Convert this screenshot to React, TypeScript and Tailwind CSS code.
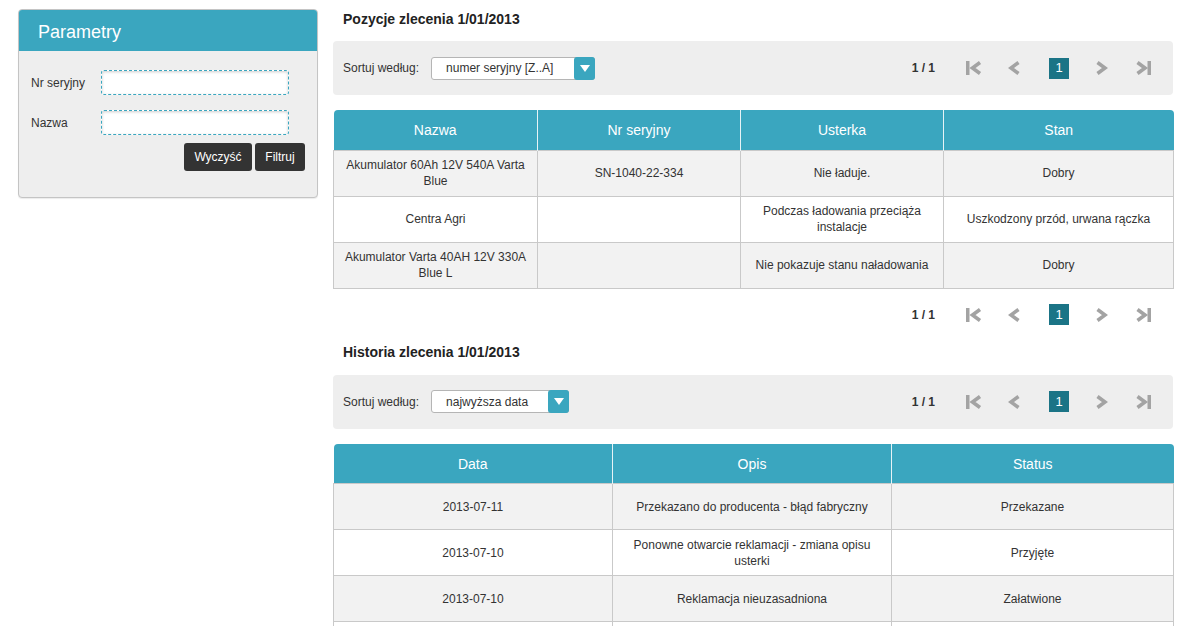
import React from "react"

const font = { fontFamily: '"Liberation Sans", Arial, sans-serif' }

type Col = { label: string; w: string }

function FirstIcon() {
  return (
    <svg width="16" height="14" viewBox="0 0 16 14">
      <rect x="0" y="0" width="3.5" height="14" fill="#a3a3a3" />
      <path d="M14 1.5 L6.5 7 L14 12.5" fill="none" stroke="#a3a3a3" strokeWidth="3.6" strokeLinejoin="miter" />
    </svg>
  )
}

function PrevIcon() {
  return (
    <svg width="12" height="14" viewBox="0 0 12 14">
      <path d="M10.5 1.5 L3 7 L10.5 12.5" fill="none" stroke="#a3a3a3" strokeWidth="3.6" />
    </svg>
  )
}

function NextIcon() {
  return (
    <svg width="12" height="14" viewBox="0 0 12 14">
      <path d="M1.5 1.5 L9 7 L1.5 12.5" fill="none" stroke="#a3a3a3" strokeWidth="3.6" />
    </svg>
  )
}

function LastIcon() {
  return (
    <svg width="15" height="14" viewBox="0 0 15 14">
      <path d="M1.5 1.5 L9 7 L1.5 12.5" fill="none" stroke="#a3a3a3" strokeWidth="3.6" />
      <rect x="11.5" y="0" width="3.5" height="14" fill="#a3a3a3" />
    </svg>
  )
}

function Pager() {
  return (
    <div className="flex items-center">
      <span className="text-[12px] font-bold text-[#333]">1 / 1</span>
      <span className="ml-[31px] flex"><FirstIcon /></span>
      <span className="ml-[26px] flex"><PrevIcon /></span>
      <span className="ml-[29px] flex h-[21px] w-[20px] items-center justify-center bg-[#1b7486] text-[13px] text-white">1</span>
      <span className="ml-[27px] flex"><NextIcon /></span>
      <span className="ml-[28px] flex"><LastIcon /></span>
    </div>
  )
}

function SortBar({ value, selectW }: { value: string; selectW: string }) {
  return (
    <div className="flex h-[54px] items-center justify-between rounded-[4px] bg-[#eeeeee] pl-[10px] pr-[22px]">
      <div className="flex items-center">
        <span className="text-[12px] text-[#333]">Sortuj według:</span>
        <div className={`ml-[12px] flex h-[23px] items-center justify-between rounded-[3px] border border-[#b5b5b5] bg-white pl-[14px] ${selectW}`}>
          <span className="text-[12px] text-[#333]">{value}</span>
          <span className="-mr-px flex h-[23px] w-[21px] items-center justify-center rounded-[3px] bg-[#3aa6bf]">
            <svg width="10" height="7" viewBox="0 0 10 7">
              <path d="M0 0 L10 0 L5 7 Z" fill="#fff" />
            </svg>
          </span>
        </div>
      </div>
      <Pager />
    </div>
  )
}

function DataTable({ cols, rows }: { cols: Col[]; rows: string[][] }) {
  return (
    <table className="w-full table-fixed border-collapse text-center">
      <thead>
        <tr className="h-[40px] bg-[#3aa6bf] text-[14px] text-white">
          {cols.map((c, i) => (
            <th
              key={c.label}
              className={`${c.w} pt-[2px] font-normal ${i === 0 ? "rounded-tl-[4px]" : "border-l border-[#e6f3f6]"} ${i === cols.length - 1 ? "rounded-tr-[4px]" : ""}`}
            >
              {c.label}
            </th>
          ))}
        </tr>
      </thead>
      <tbody>
        {rows.map((r, ri) => (
          <tr key={ri} className={`h-[46px] text-[12px] text-[#333] ${ri % 2 === 0 ? "bg-[#f2f2f2]" : "bg-white"}`}>
            {r.map((cell, ci) => (
              <td key={ci} className="border border-[#c9c9c9] px-[8px] leading-[16px]">
                {cell}
              </td>
            ))}
          </tr>
        ))}
      </tbody>
    </table>
  )
}

export default function App() {
  return (
    <div className="flex min-h-[626px] bg-white pt-[9px] pl-[18px]" style={font}>
      {/* Parametry */}
      <div className="w-[300px] shrink-0">
        <div className="overflow-hidden rounded-[4px] border border-[#c4c4c4] bg-[#eeeeee] shadow-[0_1px_1px_rgba(0,0,0,0.08)]">
          <div className="flex h-[41px] items-center bg-[#3aa6bf] pt-[3px] pl-[19px] text-[18px] text-white">Parametry</div>
          <div className="px-[12px] pt-[19px] pb-[26px]">
            <div className="flex items-center">
              <span className="w-[70px] text-[12px] text-[#333]">Nr seryjny</span>
              <input className="h-[25px] w-[188px] rounded-[3px] border border-dashed border-[#3aa6bf] bg-white shadow-[inset_0_1px_3px_rgba(0,0,0,0.2)] outline-none" />
            </div>
            <div className="mt-[15px] flex items-center">
              <span className="w-[70px] text-[12px] text-[#333]">Nazwa</span>
              <input className="h-[25px] w-[188px] rounded-[3px] border border-dashed border-[#3aa6bf] bg-white shadow-[inset_0_1px_3px_rgba(0,0,0,0.2)] outline-none" />
            </div>
            <div className="mt-[8px] flex justify-end gap-[3px]">
              <button className="h-[28px] w-[68px] rounded-[3px] bg-[#333] text-[12px] text-white">Wyczyść</button>
              <button className="h-[28px] w-[50px] rounded-[3px] bg-[#333] text-[12px] text-white">Filtruj</button>
            </div>
          </div>
        </div>
      </div>

      {/* Main */}
      <div className="ml-[15px] w-[840px] shrink-0">
        <h2 className="h-[20px] pl-[10px] text-[14px] leading-[20px] font-bold text-[#222]">Pozycje zlecenia 1/01/2013</h2>
        <div className="mt-[12px]">
          <SortBar value="numer seryjny [Z..A]" selectW="w-[164px]" />
        </div>
        <div className="mt-[15px]">
          <DataTable
            cols={[
              { label: "Nazwa", w: "w-[204px]" },
              { label: "Nr seryjny", w: "w-[203px]" },
              { label: "Usterka", w: "w-[203px]" },
              { label: "Stan", w: "w-[230px]" },
            ]}
            rows={[
              ["Akumulator 60Ah 12V 540A Varta Blue", "SN-1040-22-334", "Nie ładuje.", "Dobry"],
              ["Centra Agri", "", "Podczas ładowania przeciąża instalacje", "Uszkodzony przód, urwana rączka"],
              ["Akumulator Varta 40AH 12V 330A Blue L", "", "Nie pokazuje stanu naładowania", "Dobry"],
            ]}
          />
        </div>
        <div className="mt-[14px] flex h-[24px] justify-end pr-[22px]">
          <Pager />
        </div>

        <h2 className="mt-[15px] h-[20px] pl-[10px] text-[14px] leading-[20px] font-bold text-[#222]">Historia zlecenia 1/01/2013</h2>
        <div className="mt-[13px]">
          <SortBar value="najwyższa data" selectW="w-[138px]" />
        </div>
        <div className="mt-[15px]">
          <DataTable
            cols={[
              { label: "Data", w: "w-[279px]" },
              { label: "Opis", w: "w-[279px]" },
              { label: "Status", w: "w-[282px]" },
            ]}
            rows={[
              ["2013-07-11", "Przekazano do producenta - błąd fabryczny", "Przekazane"],
              ["2013-07-10", "Ponowne otwarcie reklamacji - zmiana opisu usterki", "Przyjęte"],
              ["2013-07-10", "Reklamacja nieuzasadniona", "Załatwione"],
              ["", "", ""],
            ]}
          />
        </div>
      </div>
    </div>
  )
}
